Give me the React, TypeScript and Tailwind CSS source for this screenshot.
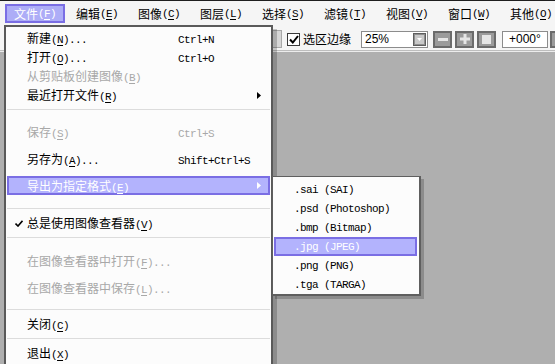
import clsx from "clsx";

const cjkCls = "font-['Noto_Sans_CJK_SC',sans-serif] text-[12px] tracking-normal";
const monoCls = "font-['Liberation_Mono',monospace] text-[11px] tracking-[-0.6px]";

// "&" marks the mnemonic letter that gets underlined
function Txt({text}: { text: string }) {
    const runs: { t: string; cjk: boolean; u: boolean }[] = [];
    for (let i = 0; i < text.length; i++) {
        let c = text[i];
        let u = false;
        if (c === "&") {
            u = true;
            i++;
            c = text[i];
        }
        const cjk = c.charCodeAt(0) > 0x2e7f;
        const last = runs[runs.length - 1];
        if (last && last.cjk === cjk && !u && !last.u) last.t += c;
        else runs.push({t: c, cjk, u});
    }
    return (
        <>
            {runs.map((r, i) => (
                <span key={i} className={clsx(r.cjk ? cjkCls : monoCls, r.u && "underline underline-offset-2")}>
                    {r.t}
                </span>
            ))}
        </>
    );
}

const TOP_MENU = ["文件(&F)", "编辑(&E)", "图像(&C)", "图层(&L)", "选择(&S)", "滤镜(&T)", "视图(&V)", "窗口(&W)", "其他(&O)"];

interface ItemProps {
    label: string;
    h: string;
    sc?: string;
    dis?: boolean;
    hi?: boolean;
    arrow?: boolean;
    check?: boolean;
}

function Arrow({hi}: { hi?: boolean }) {
    return (
        <svg width="4" height="7" viewBox="0 0 4 7" className="ml-auto mr-[7px]">
            <polygon points="0,0 4,3.5 0,7" fill={hi ? "#ffffff" : "#000000"}/>
        </svg>
    );
}

function Item({label, h, sc, dis, hi, arrow, check}: ItemProps) {
    return (
        <div
            className={clsx(
                "mx-[1px] flex items-center border-2 leading-[14px] whitespace-nowrap",
                h,
                hi ? "border-[#7a6ee4] bg-[#b3b3fd] text-white" : "border-transparent",
                dis ? "text-[#a8a8a8]" : !hi && "text-black"
            )}
        >
            <div className="flex w-[18px] shrink-0 items-center pl-[6px]">
                {check && (
                    <svg width="8" height="7" viewBox="0 0 8 7">
                        <path d="M0.5 3.5 L3 6 L7.5 0.8" stroke="#000" strokeWidth="1.6" fill="none"/>
                    </svg>
                )}
            </div>
            <div className="w-[151px] shrink-0"><Txt text={label}/></div>
            {sc && <div><Txt text={sc}/></div>}
            {arrow && <Arrow hi={hi}/>}
        </div>
    );
}

function Sep({pt, pb}: { pt: string; pb: string }) {
    return (
        <div className={clsx("mx-[1px]", pt, pb)}>
            <div className="h-px bg-[#dcdcdc]"/>
        </div>
    );
}

function SubItem({label, hi}: { label: string; hi?: boolean }) {
    return (
        <div
            className={clsx(
                "ml-[1px] mr-[2px] flex h-[19px] items-center border-2 pl-[18px] leading-[14px] whitespace-nowrap",
                hi ? "border-[#7a6ee4] bg-[#b3b3fd] text-white" : "border-transparent text-black"
            )}
        >
            <Txt text={label}/>
        </div>
    );
}

function GrayButton({children}: { children: React.ReactNode }) {
    return (
        <div className="flex h-[17px] w-[19px] shrink-0 items-center justify-center border-2 border-[#6b6b6b] bg-[#9b9b9b]">
            {children}
        </div>
    );
}

export default function App() {
    return (
        <div className="relative h-[364px] w-[555px] overflow-hidden bg-[#f5f5f5] font-['Noto_Sans_CJK_SC',sans-serif]">
            {/* menu bar */}
            <div className="flex h-[25px] gap-[2px] border-t border-[#1e1e1e] pl-[5px] pt-[3px]">
                {TOP_MENU.map((m, i) => (
                    <div
                        key={m}
                        className={clsx(
                            "flex h-[19px] w-[60px] shrink-0 items-center justify-center border-2 leading-[14px] whitespace-nowrap",
                            i === 0 ? "border-[#7a6ee4] bg-[#adadf7] text-white" : "border-transparent text-black"
                        )}
                    >
                        <Txt text={m}/>
                    </div>
                ))}
            </div>

            {/* tool bar */}
            <div className="flex h-[26px] items-center border-b border-[#bdbdbd] pt-[3px] whitespace-nowrap">
                <div className="w-[262px] shrink-0"/>
                <div className="h-[18px] w-[20px] shrink-0 border border-[#a8a8a8] bg-[#d6d6d6]"/>
                <div className="ml-[5px] flex h-[13px] w-[13px] shrink-0 items-center justify-center border border-[#3a3a3a] bg-white">
                    <svg width="10" height="9" viewBox="0 0 10 9">
                        <path d="M1 4.5 L3.8 7.5 L9 1" stroke="#000" strokeWidth="2" fill="none"/>
                    </svg>
                </div>
                <div className="ml-[3px] w-[48px] shrink-0 text-[12px] leading-[14px] text-black">选区边缘</div>
                <div className="ml-[10px] flex h-[17px] w-[67px] shrink-0 items-center border border-[#8c8c8c] bg-white">
                    <span className="ml-[3px] font-['Liberation_Sans',sans-serif] text-[12px] leading-[14px] text-black">25%</span>
                    <div className="ml-auto mr-px flex h-[13px] w-[13px] items-center justify-center border border-[#5e5e5e] bg-[#8f8f8f]">
                        <div className="flex h-[9px] w-[9px] items-center justify-center bg-[#c9c9c9]">
                            <svg width="5" height="3" viewBox="0 0 5 3">
                                <polygon points="0,0 5,0 2.5,3" fill="#ffffff"/>
                            </svg>
                        </div>
                    </div>
                </div>
                <div className="ml-[5px] flex shrink-0 gap-[3px]">
                    <GrayButton><div className="h-[3px] w-[10px] bg-[#e6e6e6]"/></GrayButton>
                    <GrayButton>
                        <svg width="10" height="10" viewBox="0 0 10 10">
                            <path d="M3.5 0 H6.5 V3.5 H10 V6.5 H6.5 V10 H3.5 V6.5 H0 V3.5 H3.5 Z" fill="#e6e6e6"/>
                        </svg>
                    </GrayButton>
                    <GrayButton><div className="h-[9px] w-[9px] bg-[#e6e6e6]"/></GrayButton>
                </div>
                <div className="ml-[6px] flex h-[17px] w-[46px] shrink-0 items-center border border-[#8c8c8c] bg-white pl-[6px] font-['Liberation_Sans',sans-serif] text-[12px] leading-[14px] text-black">
                    +000°
                </div>
                <div className="ml-[2px] shrink-0">
                    <GrayButton><div className="h-[3px] w-[10px] bg-[#e6e6e6]"/></GrayButton>
                </div>
            </div>

            {/* canvas */}
            <div className="h-full border-t border-[#ececec] bg-[#afafaf]"/>

            {/* file menu */}
            <div className="absolute left-[4px] top-[25px] h-[345px] w-[269px] border-2 border-[#5a5a5a] bg-[#fcfcfc] pt-[1px] shadow-[4px_4px_0_rgba(0,0,0,0.2)]">
                <Item label="新建(&N)..." sc="Ctrl+N" h="h-[19px]"/>
                <Item label="打开(&O)..." sc="Ctrl+O" h="h-[19px]"/>
                <Item label="从剪贴板创建图像(&B)" h="h-[19px]" dis/>
                <Item label="最近打开文件(&R)" h="h-[20px]" arrow/>
                <Sep pt="pt-[4px]" pb="pb-[8px]"/>
                <Item label="保存(&S)" sc="Ctrl+S" h="h-[28px]" dis/>
                <Item label="另存为(&A)..." sc="Shift+Ctrl+S" h="h-[26px]"/>
                <div className="h-[4px]"/>
                <Item label="导出为指定格式(&E)" h="h-[19px]" hi arrow/>
                <Sep pt="pt-[13px]" pb="pb-0"/>
                <Item label="总是使用图像查看器(&V)" h="h-[28px]" check/>
                <Sep pt="pt-0" pb="pb-[10px]"/>
                <Item label="在图像查看器中打开(&F)..." h="h-[26px]" dis/>
                <Item label="在图像查看器中保存(&L)..." h="h-[27px]" dis/>
                <Sep pt="pt-[8px]" pb="pb-0"/>
                <Item label="关闭(&C)" h="h-[28px]"/>
                <Sep pt="pt-0" pb="pb-0"/>
                <Item label="退出(&X)" h="h-[28px]"/>
            </div>

            {/* export submenu */}
            <div className="absolute left-[272px] top-[176px] w-[149px] border-l border-t border-r-2 border-b-2 border-[#5f5f5f] bg-[#fcfcfc] pt-[3px] shadow-[3px_3px_0_rgba(0,0,0,0.2)]">
                <SubItem label=".sai (SAI)"/>
                <SubItem label=".psd (Photoshop)"/>
                <SubItem label=".bmp (Bitmap)"/>
                <SubItem label=".jpg (JPEG)" hi/>
                <SubItem label=".png (PNG)"/>
                <SubItem label=".tga (TARGA)"/>
            </div>
        </div>
    );
}
